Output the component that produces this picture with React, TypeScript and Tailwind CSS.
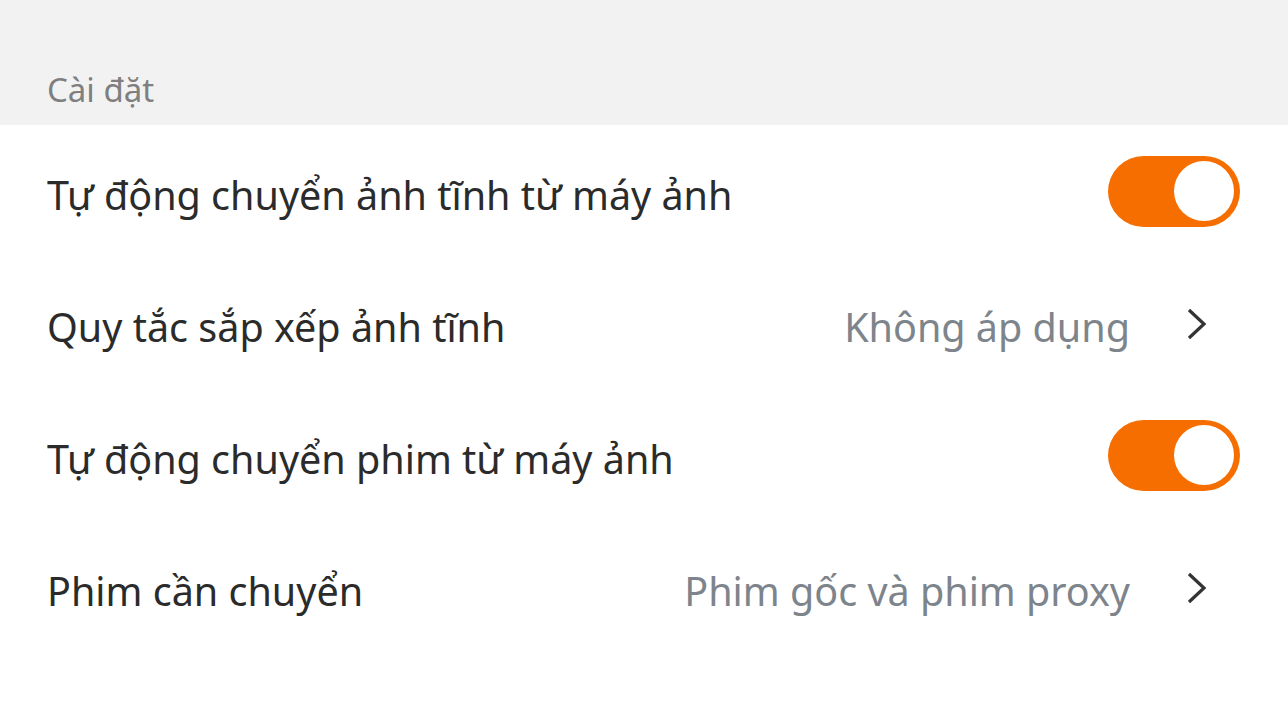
import React, { useState } from 'react';

type Row =
  | { id: string; kind: 'toggle'; label: string; on: boolean }
  | { id: string; kind: 'link'; label: string; value: string };

const ROWS: Row[] = [
  { id: 'still', kind: 'toggle', label: 'Tự động chuyển ảnh tĩnh từ máy ảnh', on: true },
  { id: 'sort', kind: 'link', label: 'Quy tắc sắp xếp ảnh tĩnh', value: 'Không áp dụng' },
  { id: 'movie', kind: 'toggle', label: 'Tự động chuyển phim từ máy ảnh', on: true },
  { id: 'which', kind: 'link', label: 'Phim cần chuyển', value: 'Phim gốc và phim proxy' },
];

function Toggle({ on, onChange }: { on: boolean; onChange: () => void }) {
  return (
    <button
      type="button"
      onClick={onChange}
      className={`flex h-[71px] w-[132px] items-center rounded-full px-[6px] ${
        on ? 'justify-end bg-[#f76e00]' : 'justify-start bg-[#c8c8c8]'
      }`}
    >
      <span className="h-[60px] w-[60px] rounded-full bg-white" />
    </button>
  );
}

function Chevron() {
  return (
    <svg width="22" height="32" viewBox="0 0 22 32" className="ml-[56px] mt-[2px]">
      <path d="M3 2 L18 16 L3 30" fill="none" stroke="#333333" strokeWidth="3.2" />
    </svg>
  );
}

export default function App() {
  const [state, setState] = useState<Record<string, boolean>>({ still: true, movie: true });

  return (
    <div className="h-[701px] w-full bg-white font-['Noto_Sans',sans-serif]">
      <div className="flex h-[125px] items-end bg-[#f2f2f2] px-[47px] pb-[19px]">
        <span className="text-[33px] leading-none text-[#7f7f7f]">Cài đặt</span>
      </div>
      {ROWS.map(r => (
        <div key={r.id} className="flex h-[132px] items-center justify-between pl-[47px] pr-[48px]">
          <span className="pt-[9px] text-[39.5px] text-[#2b2b2b]">{r.label}</span>
          {r.kind === 'toggle' ? (
            <Toggle on={state[r.id]} onChange={() => setState(s => ({ ...s, [r.id]: !s[r.id] }))} />
          ) : (
            <div className="flex items-center pr-[32px]">
              <span className="pt-[9px] text-[39.5px] text-[#7d848b]">{r.value}</span>
              <Chevron />
            </div>
          )}
        </div>
      ))}
    </div>
  );
}
